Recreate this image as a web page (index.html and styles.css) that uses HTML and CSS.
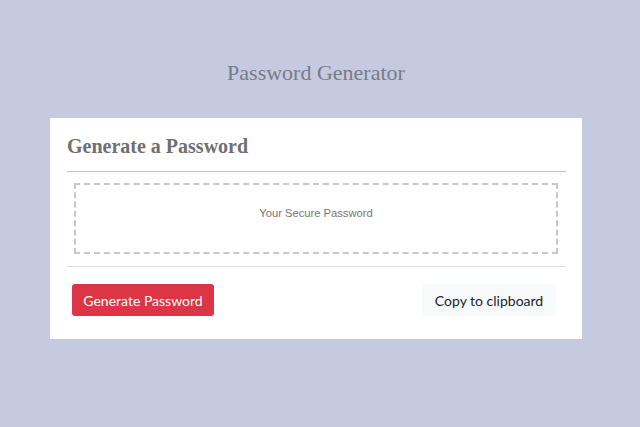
FILE: index.html
```html
<!DOCTYPE html>
<html>
<head>
<meta charset="utf-8">
<link rel="stylesheet" href="styles.css">
</head>
<body>
<div class="wrapper">
  <header class="page-header">
    <h1 class="page-title">Password Generator</h1>
  </header>
  <div class="card">
    <div class="card-header">
      <h2 class="card-title">Generate a Password</h2>
    </div>
    <div class="card-body">
      <div class="password-box">Your Secure Password</div>
    </div>
    <div class="card-footer">
      <button class="btn btn-red">Generate Password</button>
      <button class="btn btn-light">Copy to clipboard</button>
    </div>
  </div>
</div>
</body>
</html>
```
FILE: styles.css
```css
html, body {
  margin: 0;
  padding: 0;
  background: #c5cae1;
  height: 100%;
}
.wrapper {
  width: 532px;
  margin-left: 50px;
  padding-top: 60px;
}
.page-header {
  text-align: center;
}
.page-title {
  margin: 0 0 32px 0;
  font-family: "Liberation Serif", "DejaVu Serif", serif;
  font-weight: normal;
  font-size: 22px;
  line-height: 26px;
  color: #787b86;
}
.card {
  background: #ffffff;
  padding: 0 16px 0 17px;
}
.card-header {
  padding: 17px 0 13px 0;
  border-bottom: 1px solid #c4c4c4;
}
.card-title {
  margin: 0;
  font-family: "Liberation Serif", "DejaVu Serif", serif;
  font-weight: bold;
  font-size: 20px;
  line-height: 23px;
  color: #6f6f6f;
}
.card-body {
  padding: 11px 8px 12px 7px;
  border-bottom: 1px solid #dddddd;
}
.password-box {
  height: 55px;
  padding-bottom: 12px;
  border: 2px dashed #c8c8c8;
  display: flex;
  align-items: center;
  justify-content: center;
  font-family: "Liberation Sans", Arial, sans-serif;
  font-size: 11.2px;
  color: #767676;
}
.card-footer {
  display: flex;
  justify-content: space-between;
  align-items: center;
  padding: 17px 10px 23px 5px;
}
.btn {
  border: none;
  border-radius: 3px;
  height: 32px;
  padding: 0;
  white-space: nowrap;
  font-family: "Lato", "Open Sans", sans-serif;
  font-size: 14px;
  cursor: pointer;
}
.btn-red {
  background: #dc3545;
  color: #ffffff;
  width: 142px;
}
.btn-light {
  background: #f8f9fa;
  color: #212529;
  width: 134px;
}
```
